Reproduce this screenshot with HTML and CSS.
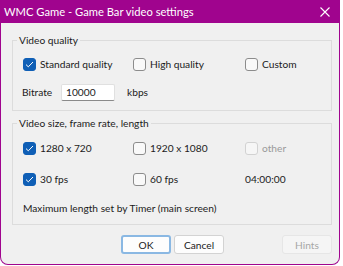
FILE: index.html
```html
<!DOCTYPE html>
<html>
<head>
<meta charset="utf-8">
<link rel="stylesheet" href="styles.css">
</head>
<body>
<div class="window">
  <div class="titlebar">
    <span class="title">WMC Game - Game Bar video settings</span>
    <svg class="close" width="10" height="10" viewBox="0 0 10 10"><path d="M0.5 0.5 L9.5 9.5 M9.5 0.5 L0.5 9.5" stroke="#fff" stroke-width="1.1" fill="none"/></svg>
  </div>
  <div class="client">
    <div class="group g1">
      <div class="group-title">Video quality</div>
      <div class="row r1">
        <label class="opt"><span class="cb checked"><svg width="9" height="7" viewBox="0 0 9 7"><path d="M1 3.6 L3.3 5.8 L8 1" stroke="#fff" stroke-width="1" fill="none"/></svg></span>Standard quality</label>
        <label class="opt"><span class="cb"></span>High quality</label>
        <label class="opt"><span class="cb"></span>Custom</label>
      </div>
      <div class="row r2">
        <span class="lbl">Bitrate</span>
        <span class="input">10000</span>
        <span class="unit">kbps</span>
      </div>
    </div>
    <div class="group g2">
      <div class="group-title">Video size, frame rate, length</div>
      <div class="row r3">
        <label class="opt"><span class="cb checked"><svg width="9" height="7" viewBox="0 0 9 7"><path d="M1 3.6 L3.3 5.8 L8 1" stroke="#fff" stroke-width="1" fill="none"/></svg></span>1280 x 720</label>
        <label class="opt"><span class="cb"></span>1920 x 1080</label>
        <label class="opt disabled"><span class="cb"></span>other</label>
      </div>
      <div class="row r4">
        <label class="opt"><span class="cb checked"><svg width="9" height="7" viewBox="0 0 9 7"><path d="M1 3.6 L3.3 5.8 L8 1" stroke="#fff" stroke-width="1" fill="none"/></svg></span>30 fps</label>
        <label class="opt"><span class="cb"></span>60 fps</label>
        <span class="time">04:00:00</span>
      </div>
      <div class="row r5">
        <span class="note">Maximum length set by Timer (main screen)</span>
      </div>
    </div>
    <div class="buttons">
      <button class="btn default">OK</button>
      <button class="btn">Cancel</button>
      <button class="btn off">Hints</button>
    </div>
  </div>
</div>
</body>
</html>
```
FILE: styles.css
```css
html, body {
  margin: 0;
  padding: 0;
  background: #ffffff;
}
body {
  font-family: Lato, "Noto Sans", sans-serif;
  font-size: 10.2px;
  color: #1b1b1b;
}
.window {
  width: 340px;
  height: 265px;
  box-sizing: border-box;
  background: #a0048e;
  border-radius: 0 0 8px 8px;
  padding: 0 1px 1px 1px;
  display: flex;
  flex-direction: column;
}
.titlebar {
  height: 22px;
  flex: none;
  display: flex;
  align-items: center;
  justify-content: space-between;
  padding: 0 9px 1px 3px;
}
.title {
  color: #ffffff;
  font-size: 11.2px;
}
.close {
  margin-top: 1px;
}
.client {
  flex: 1;
  background: #f0f0f0;
  border-radius: 0 0 7px 7px;
  padding-top: 17px;
}
.group {
  margin-left: 11px;
  width: 320px;
  box-sizing: border-box;
  border: 1px solid #dcdcdc;
  padding-left: 10px;
}
.group-title {
  margin: -7px 0 0 -6px;
  height: 13px;
  line-height: 13px;
  padding: 0 2px;
  width: max-content;
  background: #f0f0f0;
}
.g1 {
  padding-bottom: 9px;
}
.g2 {
  margin-top: 12px;
  padding-bottom: 7px;
}
.row {
  display: grid;
  grid-template-columns: 110px 112px 1fr;
  align-items: center;
  height: 18px;
}
.r1 { margin-top: 8px; }
.r2 { margin-top: 10px; grid-template-columns: 38px 66px 1fr; }
.r3 { margin-top: 9px; }
.r4 { margin-top: 13px; }
.r5 { margin-top: 11px; display: flex; }
.opt {
  display: flex;
  align-items: center;
}
.cb {
  width: 13px;
  height: 13px;
  box-sizing: border-box;
  border: 1px solid #8c8c8c;
  border-radius: 3px;
  background: #f9f9f9;
  margin-right: 4px;
  display: flex;
  align-items: center;
  justify-content: center;
}
.cb.checked {
  background: #0f5fb6;
  border-color: #0f5fb6;
}
.disabled {
  color: #9a9a9a;
}
.disabled .cb {
  border-color: #d2d2d2;
  background: #f6f6f6;
}
.lbl {
  margin-left: -1px;
}
.input {
  box-sizing: border-box;
  width: 54px;
  height: 17px;
  background: #ffffff;
  border: 1px solid #e0e0e0;
  border-bottom-color: #8a8a8a;
  border-radius: 2px;
  padding-left: 4px;
  line-height: 15px;
}
.buttons {
  display: flex;
  margin-top: 10px;
  padding-left: 120px;
}
.btn {
  width: 50px;
  height: 19px;
  box-sizing: border-box;
  font-family: inherit;
  font-size: 10.2px;
  color: #1b1b1b;
  background: #fdfdfd;
  border: 1px solid #d3d3d3;
  border-radius: 3px;
  padding: 0;
  margin-right: 3px;
}
.btn.default {
  border: 2px solid #8ab8e3;
}
.btn.off {
  margin-left: 55px;
  background: #f5f5f5;
  border-color: #e6e6e6;
  color: #a6a6a6;
}
```
